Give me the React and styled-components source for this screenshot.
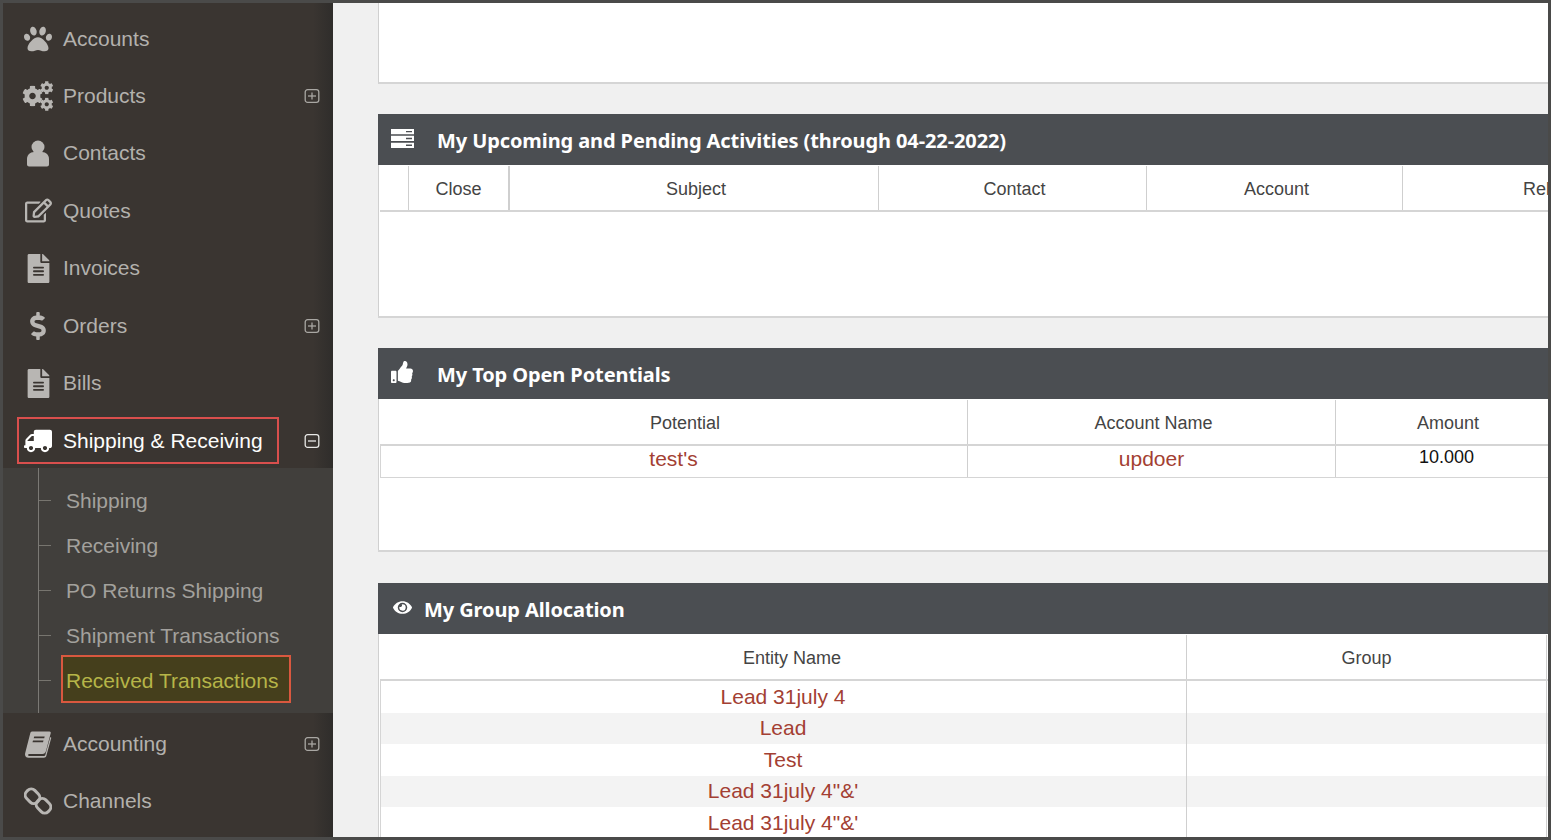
import React from "react";
import styled, { createGlobalStyle } from "styled-components";
import { FaPaw, FaCog, FaRegEdit, FaFileAlt, FaDollarSign, FaTruck, FaThumbsUp, FaEye } from "react-icons/fa";

const Global = createGlobalStyle`
  html, body { margin: 0; padding: 0; background: #4a4a4a; }
  body { font-family: "Liberation Sans", Arial, sans-serif; }
  * { box-sizing: border-box; }
`;

const Frame = styled.div`
  width: 1551px; height: 840px; overflow: hidden;
  border: 3px solid #4a4a49;
  display: flex;
`;
const Sidebar = styled.nav`
  width: 330px; flex: none; height: 100%;
  padding-top: 7px;
  background: linear-gradient(to right, #3a3531 calc(100% - 20px), #2f2d2b 100%);
  display: flex; flex-direction: column;
`;
const Item = styled.div`
  height: 57.4px; flex: none;
  display: flex; align-items: center;
  padding-left: 19px; padding-right: 13px;
  margin-top: ${p => p.$shift || 0}px;
  color: ${p => (p.$active ? "#fdfdfb" : "#b3b1ad")};
`;
const IconSlot = styled.span`
  width: 32px; height: 30px; flex: none;
  display: flex; align-items: center; justify-content: center;
  color: ${p => (p.$active ? "#ffffff" : "#b8b6b3")};
  font-size: ${p => p.$size || 26}px;
  svg { display: block; }
`;
const ItemLabel = styled.span`
  font-size: 21px; line-height: 28px; margin-left: 9px;
`;
const Spacer = styled.span`flex: 1;`;
const ActiveBox = styled.div`
  width: 262px; height: 47px; margin-left: -5px;
  border: 2px solid #d94f4d;
  display: flex; align-items: center;
  padding-left: 3px; padding-top: 1px;
`;
const Toggle = styled.svg`
  width: 16px; height: 16px; flex: none;
  margin-top: ${p => (p.$active ? "2px" : "0")};
  color: ${p => (p.$active ? "#e8e8e6" : "#a9a7a3")};
`;
const SubMenu = styled.div`
  background: #413f3c;
  height: 245px; flex: none;
  padding-left: 35px;
  margin-top: -1px;
`;
const SubList = styled.div`
  height: 100%;
  border-left: 1px solid #7b7975;
  padding-top: 10px;
`;
const SubRow = styled.div`
  height: 45px; display: flex; align-items: center;
`;
const Tick = styled.span`
  width: 12px; height: 1px; flex: none; background: #77756f;
`;
const SubLabel = styled.span`
  margin-left: 10px; width: 230px;
  height: ${p => (p.$selected ? "48px" : "auto")};
  margin-top: ${p => (p.$selected ? "-4px" : "0")};
  padding-top: ${p => (p.$selected ? "4px" : "0")};
  display: flex; align-items: center;
  padding-left: ${p => (p.$selected ? 3 : 5)}px;
  font-size: 21px; line-height: 28px;
  color: ${p => (p.$selected ? "#b6b548" : "#a3a19d")};
  background: ${p => (p.$selected ? "#453f1c" : "transparent")};
  border: ${p => (p.$selected ? "2px solid #d9583f" : "none")};
`;

const Main = styled.main`
  flex: 1; min-width: 0; height: 100%; overflow: hidden;
  background: #f0f0f0;
  padding-left: 45px;
  display: flex; flex-direction: column; gap: 31px;
`;
const Blank = styled.div`
  height: 81px; flex: none; background: #fff;
  margin-bottom: -1px;
  border-left: 1px solid #d0d0d0;
  border-bottom: 2px solid #d5d5d5;
`;
const Panel = styled.section`
  flex: none; height: ${p => p.$h}px;
  margin-bottom: ${p => p.$mb || 0}px;
  display: flex; flex-direction: column;
  background: #fff;
  border-bottom: ${p => (p.$open ? "none" : "2px solid #d5d5d5")};
`;
const PanelHead = styled.header`
  height: 51px; flex: none;
  background: #4b4e52;
  display: flex; align-items: center;
  color: #fff;
`;
const HeadIcon = styled.span`
  width: ${p => p.$w}px; flex: none; padding-left: ${p => p.$pl || 12}px;
  font-size: ${p => p.$size || 22}px;
  display: flex; align-items: center;
  margin-top: -3px;
  svg { display: block; }
`;
const HeadTitle = styled.h2`
  margin: 2px 0 0;
  font-family: "Noto Sans", "DejaVu Sans", sans-serif;
  font-size: 20px; font-weight: 700; letter-spacing: -0.1px; line-height: 26px;
  white-space: nowrap;
`;
const PanelBody = styled.div`
  flex: 1; min-height: 0; overflow: hidden;
  border-left: 1px solid #d0d0d0;
  padding-left: 1px;
`;
const HeadRow = styled.div`
  display: grid; grid-template-columns: ${p => p.$cols};
  height: 46px;
  margin-top: 1px;
  border-bottom: 2px solid #d5d5d5;
`;
const HeadCell = styled.div`
  display: flex; align-items: center; justify-content: ${p => (p.$start ? "flex-start" : "center")};
  font-size: 18px; color: #444;
  white-space: nowrap;
  padding-top: 2px;
  padding-left: ${p => p.$pl || 0}px;
  border-left: ${p => (p.$line ? `${p.$line}px solid #cfcfcf` : "none")};
  border-right: ${p => (p.$end ? "1px solid #cfcfcf" : "none")};
`;
const DataRow = styled.div`
  display: grid; grid-template-columns: ${p => p.$cols};
  height: ${p => p.$h}px;
  background: ${p => (p.$alt ? "#f3f3f3" : "#fff")};
  box-shadow: inset 1px 0 0 #d5d5d5;
  border-bottom: ${p => (p.$ruled ? "1px solid #d5d5d5" : "none")};
`;
const Cell = styled.div`
  display: flex; align-items: center; justify-content: center;
  font-size: 21px;
  color: #a33f33;
  padding-bottom: ${p => p.$pb || 0}px;
  border-left: ${p => (p.$line ? "1px solid #cfcfcf" : "none")};
  border-right: ${p => (p.$end ? "1px solid #cfcfcf" : "none")};
  white-space: nowrap;
`;
const AmountCell = styled.div`
  display: flex; align-items: center;
  padding-left: 83px; padding-bottom: 8px;
  border-left: 1px solid #cfcfcf;
  font-size: 18px; color: #111;
`;

const Plus = ({ active, minus }) => (
  <Toggle viewBox="0 0 16 16" fill="none" stroke="currentColor" strokeWidth="1.3" $active={active}>
    <rect x="1.2" y="1.700" width="13.6" height="12.6" rx="2.4" />
    <path d="M4 8h8" />
    {!minus && <path d="M8 4.600v6.800" />}
  </Toggle>
);

const Cogs = () => (
  <svg width="32" height="30" viewBox="0 0 32 30" fill="currentColor">
    <FaCog x="0" y="4.500" size="21" />
    <FaCog x="18" y="0" size="13.500" />
    <FaCog x="18" y="16.500" size="13.500" />
  </svg>
);

const Person = () => (
  <svg width="24" height="27" viewBox="0 0 24 27" fill="currentColor">
    <circle cx="12" cy="7" r="6.500" />
    <path d="M1 24.500V19c0-4 3-7 7-7h8c4 0 7 3 7 7v5.500c0 1-1 2-2 2H3c-1 0-2-1-2-2z" />
  </svg>
);

const TiltedBook = () => (
  <svg width="28" height="28" viewBox="0 0 28 28">
    <path fill="currentColor" d="M8 1.500h17.500c1 0 1.500.8 1.200 1.800L22 21c-.5 1.800-1.800 3-3.500 3H5.500c-.9 0-1.400.5-1.400 1s.5 1 1.400 1h14.500c.6 0 1.100-.3 1.300-.9L26.300 7l1 .8-5 18.300c-.3 1-1.200 1.700-2.300 1.700H4.500C2.500 27.800 1 26.500 1 24.500c0-.7.1-1.400.4-2.200L6.200 3.500C6.500 2.300 7 1.500 8 1.500z" />
    <path fill="#3a3531" d="M10.200 6.500h10.500l-.5 1.800H9.700zM9 10.500h10.500l-.5 1.800H8.500z" />
  </svg>
);

const Chain = () => (
  <svg width="28" height="28" viewBox="0 0 28 28" fill="none" stroke="currentColor" strokeWidth="3">
    <rect x="1" y="3.500" width="15" height="11.500" rx="5" transform="rotate(45 8.500 9.250)" />
    <rect x="12" y="13" width="15" height="11.500" rx="5" transform="rotate(45 19.500 18.750)" />
  </svg>
);

const ServerIcon = () => (
  <svg width="23" height="19" viewBox="0 0 23 19" fill="#fff">
    <path d="M0 0h23v5.300H0zM0 6.800h23v5.300H0zM0 13.700h23V19H0z" />
    <path fill="#4b4e52" d="M15 1.900h6v1.400h-6zM15 8.800h6v1.400h-6zM15 15.600h6v1.400h-6z" />
  </svg>
);

const FlippedTruck = styled(FaTruck)`transform: scaleX(-1);`;

const subs = ["Shipping", "Receiving", "PO Returns Shipping", "Shipment Transactions"];
const actCols = "28px 100px 370px 268px 256px 400px";
const potCols = "587px 368px 240px";
const grpCols = "806px 361px";
const leads = ["Lead 31july 4", "Lead", "Test", "Lead 31july 4\"&'", "Lead 31july 4\"&'"];

export default function App() {
  return (
    <>
      <Global />
      <Frame>
        <Sidebar>
          <Item><IconSlot $size={28}><FaPaw /></IconSlot><ItemLabel>Accounts</ItemLabel></Item>
          <Item><IconSlot><Cogs /></IconSlot><ItemLabel>Products</ItemLabel><Spacer /><Plus /></Item>
          <Item><IconSlot><Person /></IconSlot><ItemLabel>Contacts</ItemLabel></Item>
          <Item><IconSlot $size={27}><FaRegEdit /></IconSlot><ItemLabel>Quotes</ItemLabel></Item>
          <Item><IconSlot $size={29}><FaFileAlt /></IconSlot><ItemLabel>Invoices</ItemLabel></Item>
          <Item><IconSlot $size={28}><FaDollarSign /></IconSlot><ItemLabel>Orders</ItemLabel><Spacer /><Plus /></Item>
          <Item><IconSlot $size={29}><FaFileAlt /></IconSlot><ItemLabel>Bills</ItemLabel></Item>
          <Item $active>
            <ActiveBox>
              <IconSlot $active $size={28}><FlippedTruck /></IconSlot>
              <ItemLabel>Shipping &amp; Receiving</ItemLabel>
            </ActiveBox>
            <Spacer />
            <Plus active minus />
          </Item>
          <SubMenu>
            <SubList>
              {subs.map(s => (
                <SubRow key={s}><Tick /><SubLabel>{s}</SubLabel></SubRow>
              ))}
              <SubRow><Tick /><SubLabel $selected>Received Transactions</SubLabel></SubRow>
            </SubList>
          </SubMenu>
          <Item $shift={2}><IconSlot><TiltedBook /></IconSlot><ItemLabel>Accounting</ItemLabel><Spacer /><Plus /></Item>
          <Item><IconSlot><Chain /></IconSlot><ItemLabel>Channels</ItemLabel></Item>
        </Sidebar>
        <Main>
          <Blank />
          <Panel $h={204} $mb={-1}>
            <PanelHead>
              <HeadIcon $w={59} $pl={13}><ServerIcon /></HeadIcon>
              <HeadTitle>My Upcoming and Pending Activities (through 04-22-2022)</HeadTitle>
            </PanelHead>
            <PanelBody>
              <HeadRow $cols={actCols}>
                <HeadCell />
                <HeadCell $line={1}>Close</HeadCell>
                <HeadCell $line={2} $pl={4}>Subject</HeadCell>
                <HeadCell $line={1} $pl={4}>Contact</HeadCell>
                <HeadCell $line={1} $pl={4}>Account</HeadCell>
                <HeadCell $line={1} $start $pl={120}>Related To</HeadCell>
              </HeadRow>
            </PanelBody>
          </Panel>
          <Panel $h={204}>
            <PanelHead>
              <HeadIcon $w={59} $pl={13}><FaThumbsUp /></HeadIcon>
              <HeadTitle>My Top Open Potentials</HeadTitle>
            </PanelHead>
            <PanelBody>
              <HeadRow $cols={potCols}>
                <HeadCell $pl={23}>Potential</HeadCell>
                <HeadCell $line={1} $pl={4}>Account Name</HeadCell>
                <HeadCell $line={1} $start $pl={81}>Amount</HeadCell>
              </HeadRow>
              <DataRow $cols={potCols} $h={32} $ruled>
                <Cell $pb={6}>test's</Cell>
                <Cell $line $pb={6}>updoer</Cell>
                <AmountCell>10.000</AmountCell>
              </DataRow>
            </PanelBody>
          </Panel>
          <Panel $h={254} $open>
            <PanelHead>
              <HeadIcon $w={46} $pl={15} $size={19}><FaEye /></HeadIcon>
              <HeadTitle>My Group Allocation</HeadTitle>
            </PanelHead>
            <PanelBody>
              <HeadRow $cols={grpCols}>
                <HeadCell $pl={18}>Entity Name</HeadCell>
                <HeadCell $line={1} $end>Group</HeadCell>
              </HeadRow>
              {leads.map((l, i) => (
                <DataRow key={i} $cols={grpCols} $h={31.5} $alt={i % 2 === 1}>
                  <Cell>{l}</Cell>
                  <Cell $line $end />
                </DataRow>
              ))}
            </PanelBody>
          </Panel>
        </Main>
      </Frame>
    </>
  );
}
